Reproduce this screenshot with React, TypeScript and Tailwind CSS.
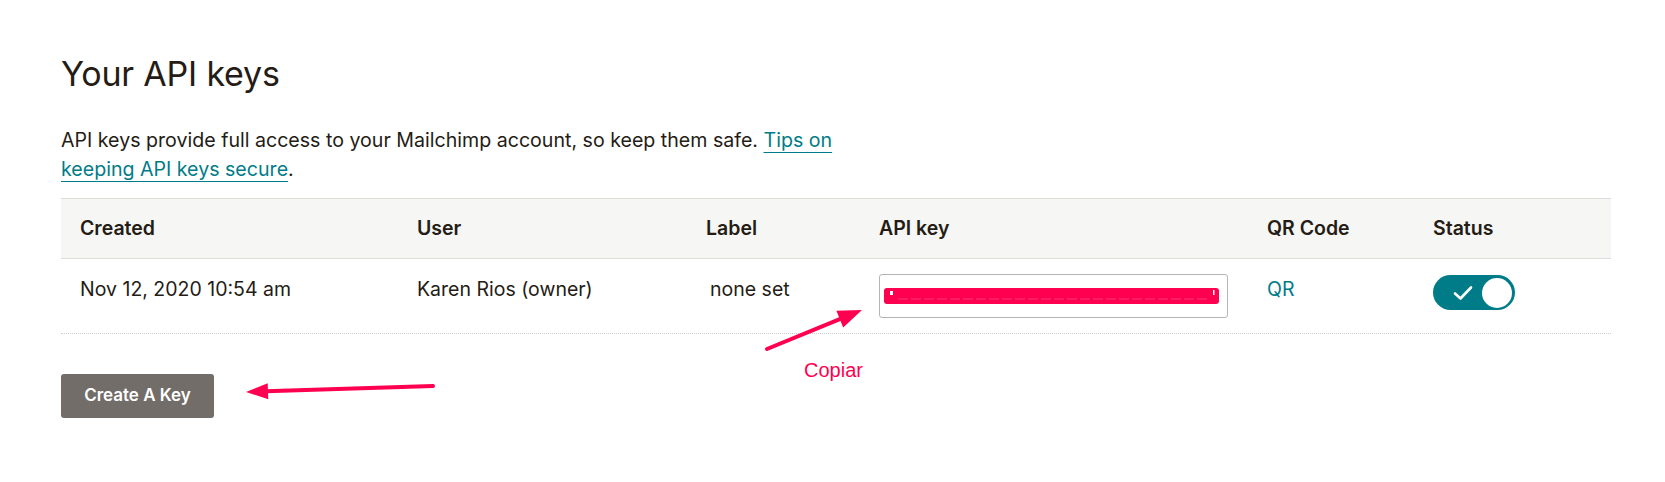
import React from "react";

const font = { fontFamily: "Inter, 'Noto Sans', sans-serif" };

function Toggle() {
  return (
    <div className="relative flex h-[35px] w-[82px] items-center rounded-full bg-[#007c89]">
      <svg width="20" height="16" viewBox="0 0 20 16" className="ml-[20px]">
        <path d="M2 8.5 L7.5 13.5 L18 2.5" fill="none" stroke="#fff" strokeWidth="2.6" strokeLinecap="round" strokeLinejoin="round" />
      </svg>
      <div className="absolute right-[3px] top-[2.5px] h-[30px] w-[30px] rounded-full bg-white" />
    </div>
  );
}

export default function App() {
  return (
    <div className="relative h-[482px] w-[1665px] bg-white text-[#241c15]" style={font}>
      <div className="pl-[61px] pr-[54px] pt-[52px]">
        <h1 className="text-[34px] leading-[43px] font-normal tracking-[-0.2px]">Your API keys</h1>
        <p className="mt-[31px] text-[19.6px] leading-[29px]">
          API keys provide full access to your Mailchimp account, so keep them safe.{" "}
          <a className="text-[#007c89] underline underline-offset-[5px] decoration-1">Tips on</a>
          <br />
          <a className="text-[#007c89] underline underline-offset-[5px] decoration-1">keeping API keys secure</a>.
        </p>

        <div className="mt-[14px]">
          <div className="grid h-[61px] grid-cols-[337px_289px_173px_388px_166px_1fr] items-center border-t border-b border-[#dcdcd8] bg-[#f6f6f4] pl-[19px] text-[19.5px] font-semibold">
            <div>Created</div>
            <div>User</div>
            <div>Label</div>
            <div>API key</div>
            <div>QR Code</div>
            <div>Status</div>
          </div>
          <div className="grid grid-cols-[337px_289px_173px_388px_166px_1fr] items-start border-b border-dotted border-[#cfcfcf] pb-[15px] pl-[19px] pt-[15px] text-[19.5px] leading-[28px]">
            <div className="pt-[1px]">Nov 12, 2020 10:54 am</div>
            <div className="pt-[1px]">Karen Rios (owner)</div>
            <div className="pl-[4px] pt-[1px]">none set</div>
            <div className="flex h-[44px] w-[349px] items-center rounded-[3px] border border-[#b5b5b5] bg-white pl-[4px]">
              <svg width="336" height="18" viewBox="0 0 336 18">
                <rect x="0" y="1" width="335" height="16" rx="3" fill="#ff0050" />
                <rect x="6" y="4" width="3" height="4" fill="#fff" />
                <line x1="14" y1="12" x2="325" y2="12" stroke="#ff3a74" strokeWidth="1" strokeDasharray="10 3" />
                <rect x="329" y="3" width="1.5" height="5" fill="#fff" />
              </svg>
            </div>
            <div className="pt-[1px] text-[#007c89]">QR</div>
            <div className="pt-[1px]">
              <Toggle />
            </div>
          </div>
        </div>

        <button className="mt-[40px] flex h-[44px] w-[153px] items-center justify-center rounded-[3px] bg-[#726d68] text-[17px] font-semibold text-white">
          Create A Key
        </button>
      </div>

      <div className="pointer-events-none absolute inset-0">
        <svg width="1665" height="482" className="absolute left-0 top-0">
          <line x1="767" y1="349" x2="841" y2="318.6" stroke="#ff0050" strokeWidth="4" strokeLinecap="round" />
          <polygon points="862,310 843.2,327.4 836.4,310.8" fill="#ff0050" />
          <line x1="433" y1="386" x2="266" y2="391.3" stroke="#ff0050" strokeWidth="4" strokeLinecap="round" />
          <polygon points="246,392 268.3,399.3 267.7,383.3" fill="#ff0050" />
        </svg>
        <div
          className="absolute left-[804px] top-[360px] text-[20px] leading-none text-[#ff0050]"
          style={{ fontFamily: "'Liberation Sans', Arial, sans-serif" }}
        >
          Copiar
        </div>
      </div>
    </div>
  );
}
